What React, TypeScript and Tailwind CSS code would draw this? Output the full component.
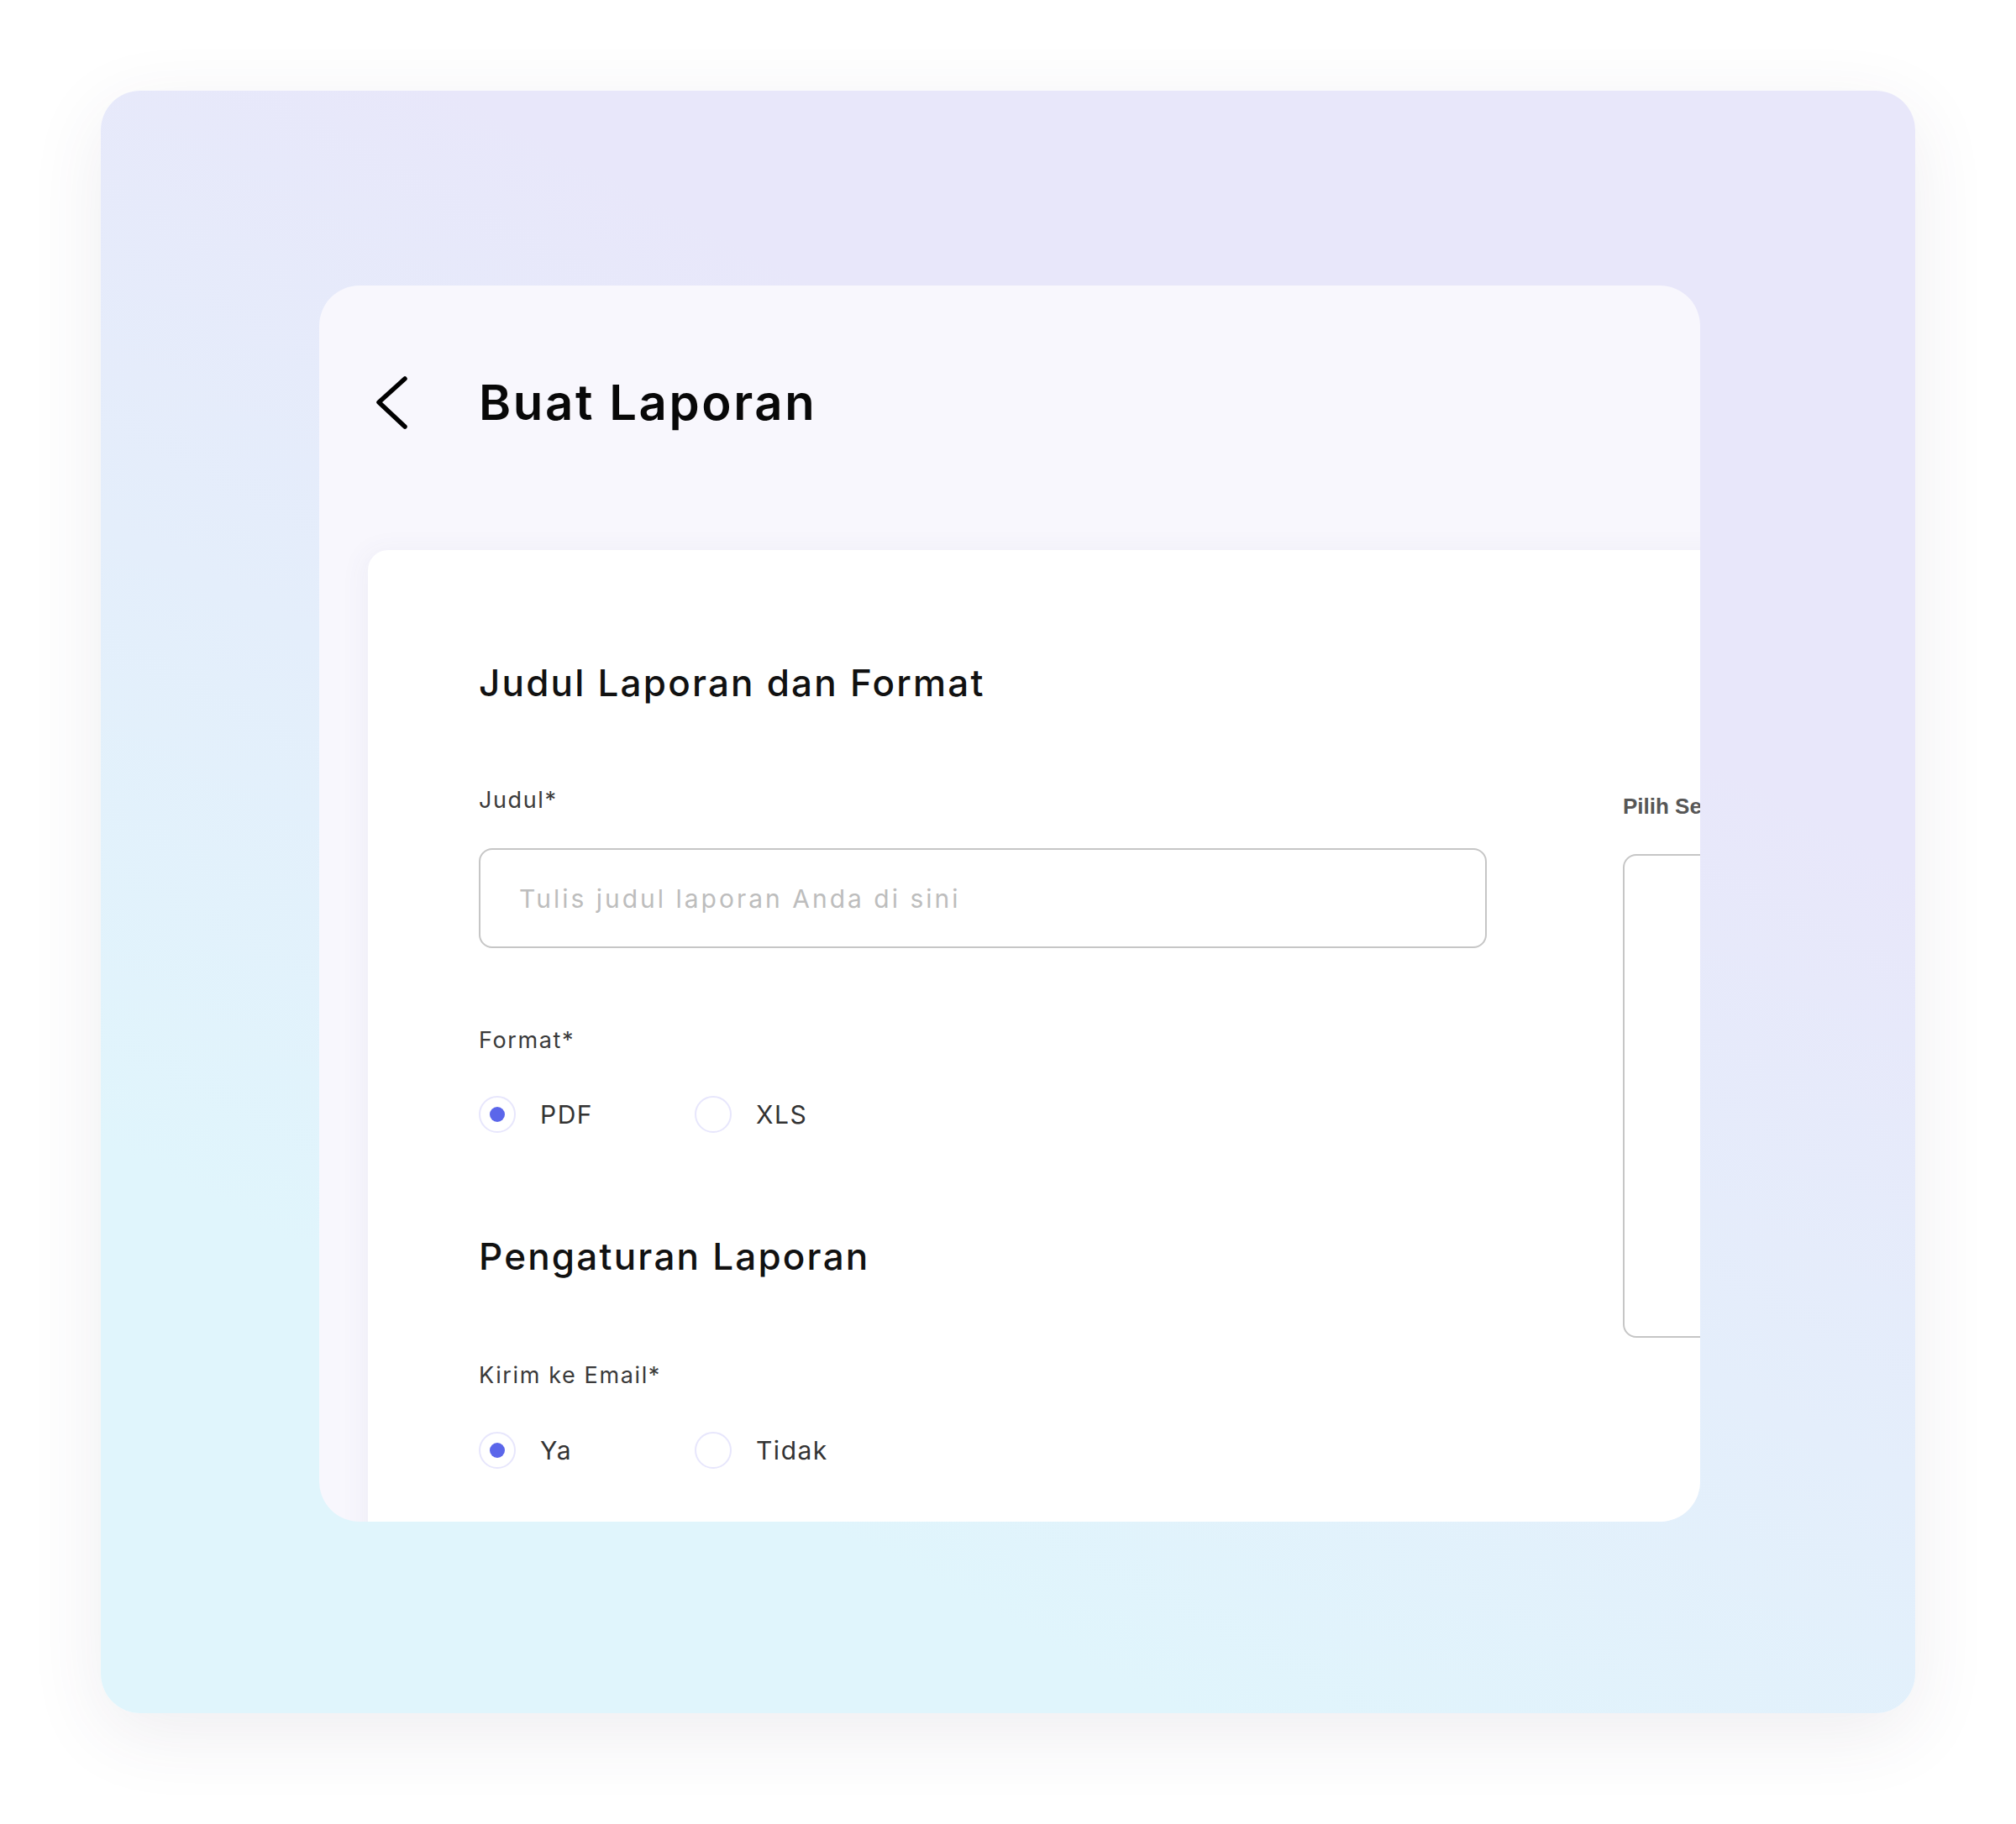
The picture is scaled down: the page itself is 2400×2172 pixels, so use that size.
import React from 'react'

// radio option used for format + email choice
function RadioOption({ label, checked }: { label: string; checked?: boolean }) {
  return (
    <div className="flex w-[257px] items-center gap-[29px]">
      <div className="flex h-[44px] w-[44px] items-center justify-center rounded-full border-2 border-[#e7e6fc] bg-white">
        {checked && <div className="h-[18px] w-[18px] rounded-full bg-[#5b66ea]" />}
      </div>
      <span className="text-[30px] leading-none tracking-[0.05em] text-[#333333]">{label}</span>
    </div>
  )
}

export default function App() {
  return (
    <div
      className="h-[2172px] w-full bg-white pl-[120px] pt-[108px]"
      style={{ fontFamily: 'Inter, "Noto Sans", sans-serif' }}
    >
      <div className="h-[1932px] w-[2160px] rounded-[47px] bg-[linear-gradient(208deg,#e8e7fa_30%,#e0f5fc_78%)] pl-[260px] pt-[232px] shadow-[0_24px_90px_rgba(70,50,90,0.09)]">
        <div className="h-[1472px] w-[1644px] overflow-hidden rounded-[48px] bg-[#f8f7fd]">
          {/* header */}
          <div className="flex items-center pl-[66px] pt-[107px]">
            <svg width="40" height="64" viewBox="0 0 40 64" fill="none">
              <polyline
                points="36,4 5,32 36,61"
                stroke="#000"
                strokeWidth="5.5"
                strokeLinecap="round"
                strokeLinejoin="round"
              />
            </svg>
            <h1 className="ml-[84px] text-[58px] font-semibold leading-none tracking-[0.045em] text-[#080808]">
              Buat Laporan
            </h1>
          </div>

          {/* form card */}
          <div className="ml-[58px] mt-[144px] flex h-[1400px] w-[1800px] gap-[162px] rounded-tl-[24px] bg-white pl-[132px] pt-[136px] shadow-[-6px_0_30px_rgba(80,70,130,0.05)]">
            <div className="flex w-[1200px] flex-col">
              <h2 className="text-[44px] font-medium leading-none tracking-[0.05em] text-[#111111]">
                Judul Laporan dan Format
              </h2>

              <label className="mt-[104px] text-[27px] leading-none tracking-[0.06em] text-[#3a3a3a]">Judul*</label>
              <div className="mt-[44px] flex h-[119px] w-[1200px] items-center rounded-[16px] border-2 border-[#c6c6c6] pl-[46px]">
                <span className="text-[30px] leading-none tracking-[0.1em] text-[#bdbdbd]">
                  Tulis judul laporan Anda di sini
                </span>
              </div>

              <label className="mt-[96px] text-[27px] leading-none tracking-[0.06em] text-[#3a3a3a]">Format*</label>
              <div className="mt-[53px] flex">
                <RadioOption label="PDF" checked />
                <RadioOption label="XLS" />
              </div>

              <h2 className="mt-[125px] text-[44px] font-medium leading-none tracking-[0.05em] text-[#111111]">
                Pengaturan Laporan
              </h2>

              <label className="mt-[106px] text-[27px] leading-none tracking-[0.06em] text-[#3a3a3a]">
                Kirim ke Email*
              </label>
              <div className="mt-[54px] flex">
                <RadioOption label="Ya" checked />
                <RadioOption label="Tidak" />
              </div>
            </div>

            <div className="flex flex-col pt-[156px]">
              <label
                className="whitespace-nowrap text-[26px] font-bold leading-none text-[#575757]"
                style={{ fontFamily: '"Liberation Sans", Arial, sans-serif' }}
              >
                Pilih Sektor*
              </label>
              <div className="mt-[44px] h-[576px] w-[600px] rounded-[16px] border-2 border-[#c6c6c6]" />
            </div>
          </div>
        </div>
      </div>
    </div>
  )
}
